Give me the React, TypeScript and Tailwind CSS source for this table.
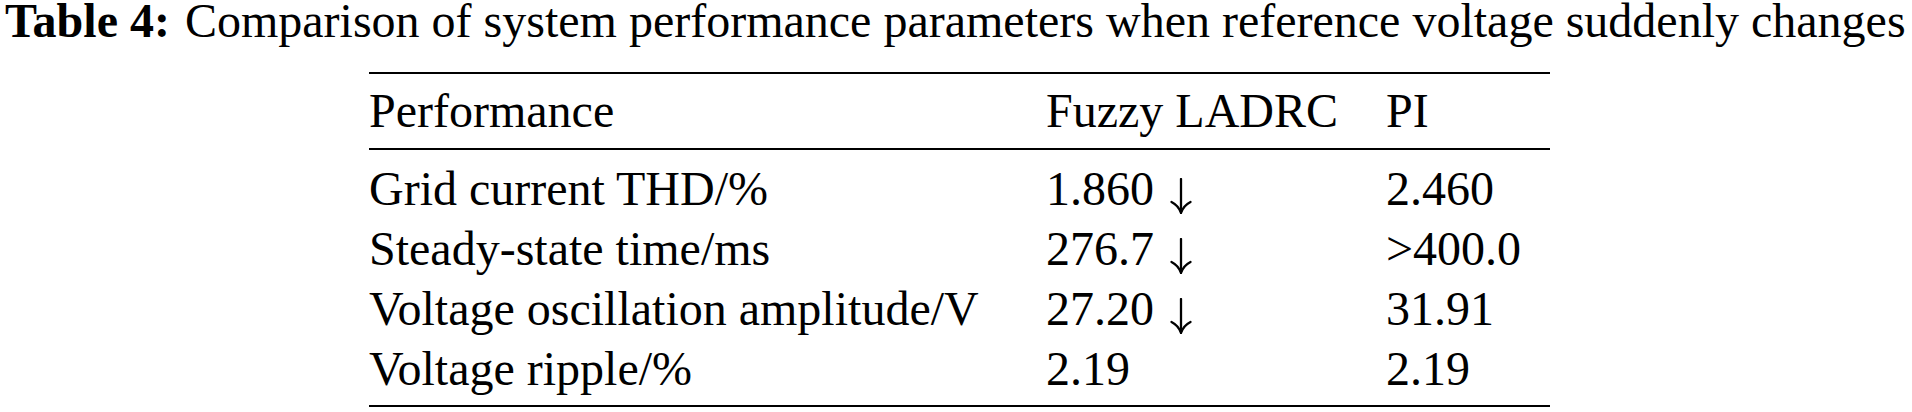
const rows = [
  { name: 'Grid current THD/%', fuzzy: '1.860', down: true, pi: '2.460' },
  { name: 'Steady-state time/ms', fuzzy: '276.7', down: true, pi: '>400.0' },
  { name: 'Voltage oscillation amplitude/V', fuzzy: '27.20', down: true, pi: '31.91' },
  { name: 'Voltage ripple/%', fuzzy: '2.19', down: false, pi: '2.19' },
]

// thin math-style down arrow, like \downarrow
function DownArrow() {
  return (
    <svg viewBox="0 0 22 36" className="inline-block w-[22px] h-[36px] ml-[16px] align-[-9px]" fill="none" stroke="black" strokeWidth="2.3" strokeLinecap="round">
      <path d="M11 1 V34" />
      <path d="M1.5 24 Q8.5 27.5 11 35 Q13.5 27.5 20.5 24" />
    </svg>
  )
}

export default function App() {
  return (
    <div className="w-[1912px] h-[412px] bg-white text-black font-['Liberation_Serif','Times_New_Roman',serif] overflow-hidden">
      <p className="text-[48px] leading-[42px] whitespace-nowrap pl-[5px]">
        <span className="font-bold">Table 4:</span>
        <span className="ml-[15px]">Comparison of system performance parameters when reference voltage suddenly changes</span>
      </p>

      <div className="w-[1181px] ml-[369px] mt-[30px] border-t-2 border-b-2 border-black text-[48px]">
        <div className="grid grid-cols-[677px_340px_164px] leading-[74px] border-b-2 border-black">
          <div>Performance</div>
          <div>Fuzzy LADRC</div>
          <div>PI</div>
        </div>
        <div className="pt-[9px] pb-[6px]">
          {rows.map((r) => (
            <div key={r.name} className="grid grid-cols-[677px_340px_164px] leading-[60px]">
              <div className="whitespace-nowrap">{r.name}</div>
              <div className="whitespace-nowrap">
                {r.fuzzy}
                {r.down && <DownArrow />}
              </div>
              <div className="whitespace-nowrap">{r.pi}</div>
            </div>
          ))}
        </div>
      </div>
    </div>
  )
}
